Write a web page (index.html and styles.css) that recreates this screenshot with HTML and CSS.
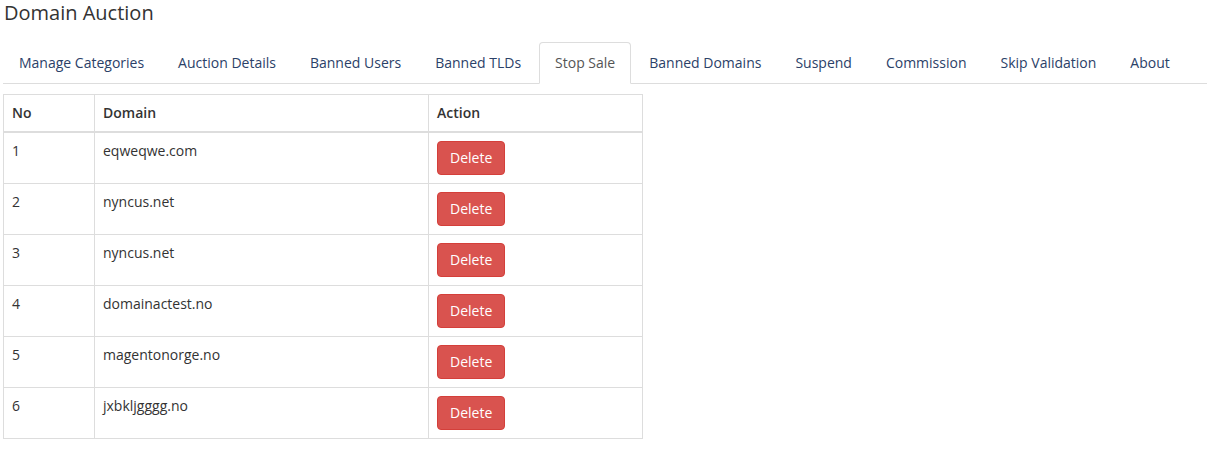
FILE: index.html
```html
<!DOCTYPE html>
<html>
<head>
<meta charset="utf-8">
<link rel="stylesheet" href="styles.css">
</head>
<body>
<div class="page">
  <h2 class="title">Domain Auction</h2>
  <ul class="tabs">
    <li class="tab"><a href="#">Manage Categories</a></li>
    <li class="tab"><a href="#">Auction Details</a></li>
    <li class="tab"><a href="#">Banned Users</a></li>
    <li class="tab"><a href="#">Banned TLDs</a></li>
    <li class="tab active"><a href="#">Stop Sale</a></li>
    <li class="tab"><a href="#">Banned Domains</a></li>
    <li class="tab"><a href="#">Suspend</a></li>
    <li class="tab"><a href="#">Commission</a></li>
    <li class="tab"><a href="#">Skip Validation</a></li>
    <li class="tab"><a href="#">About</a></li>
  </ul>
  <table class="grid">
    <thead>
      <tr><th class="c-no">No</th><th class="c-domain">Domain</th><th class="c-action">Action</th></tr>
    </thead>
    <tbody>
      <tr><td>1</td><td>eqweqwe.com</td><td><button class="btn-del">Delete</button></td></tr>
      <tr><td>2</td><td>nyncus.net</td><td><button class="btn-del">Delete</button></td></tr>
      <tr><td>3</td><td>nyncus.net</td><td><button class="btn-del">Delete</button></td></tr>
      <tr><td>4</td><td>domainactest.no</td><td><button class="btn-del">Delete</button></td></tr>
      <tr><td>5</td><td>magentonorge.no</td><td><button class="btn-del">Delete</button></td></tr>
      <tr><td>6</td><td>jxbkljgggg.no</td><td><button class="btn-del">Delete</button></td></tr>
    </tbody>
  </table>
</div>
</body>
</html>
```

FILE: styles.css
```css
* { box-sizing: border-box; }
html, body { margin: 0; padding: 0; background: #fff; }
body {
  font-family: "Open Sans", "Liberation Sans", sans-serif;
  font-size: 14px;
  line-height: 20px;
  color: #333;
}
.page { padding: 0 0 0 3px; }
.title {
  margin: 0 0 16px 1px;
  font-size: 20px;
  line-height: 26px;
  font-weight: 400;
  color: #333;
}
.tabs {
  list-style: none;
  margin: 0;
  padding: 0;
  display: flex;
  border-bottom: 1px solid #ddd;
}
.tab {
  margin-bottom: -1px;
  margin-right: 2px;
}
.tab a {
  display: block;
  padding: 10px 15px;
  border: 1px solid transparent;
  border-radius: 4px 4px 0 0;
  color: #2b4168;
  text-decoration: none;
  line-height: 20px;
}
.tab.active a {
  color: #555;
  background: #fff;
  border-color: #ddd #ddd transparent #ddd;
}
.grid {
  margin-top: 10px;
  border-collapse: collapse;
  border: 1px solid #ddd;
  width: 640px;
}
.grid th, .grid td {
  border: 1px solid #ddd;
  padding: 8px;
  text-align: left;
  vertical-align: top;
  line-height: 20px;
}
.grid th {
  font-weight: 600;
  border-bottom-width: 2px;
}
.c-no { width: 91px; }
.c-domain { width: 334px; }
.btn-del {
  font-family: inherit;
  font-size: 14px;
  line-height: 20px;
  padding: 6px 12px;
  color: #fff;
  background: #d9534f;
  border: 1px solid #d43f3a;
  border-radius: 4px;
  cursor: pointer;
}
```
